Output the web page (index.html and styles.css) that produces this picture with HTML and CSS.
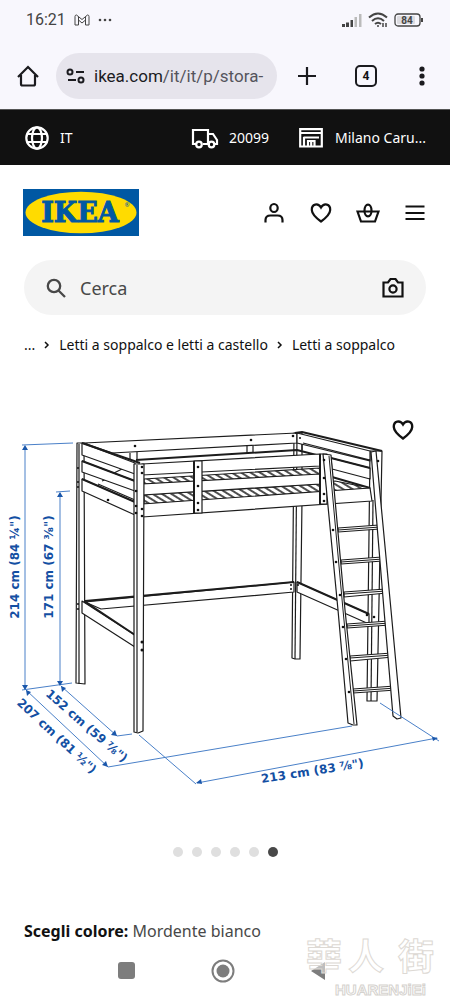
FILE: index.html
```html
<!DOCTYPE html>
<html lang="it">
<head>
    <meta charset="UTF-8">
    <meta name="viewport" content="width=device-width, initial-scale=1">
    <title>STORÅ - IKEA Italia</title>
    <link rel="stylesheet" href="styles.css">
</head>
<body>
    <div class="browser">
        <div class="status">
            <span class="time">16:21</span>
            <svg width="16" height="12" viewBox="0 0 16 12" fill="none" stroke="#444" stroke-width="1"><path d="M1 11V2.500Q1 1 2.500 1L8 5.500L13.500 1Q15 1 15 2.500V11H11.500V6L8 9L4.500 6V11Z"/><path d="M4.500 6V3M11.500 6V3"/></svg>
            <svg width="14" height="12" viewBox="0 0 14 12" fill="#444"><circle cx="2" cy="6" r="1.300"/><circle cx="7" cy="6" r="1.300"/><circle cx="12" cy="6" r="1.300"/></svg>
            <div class="status-right">
                <svg width="20" height="14" viewBox="0 0 20 14"><path fill="#444" d="M0 11h3v3H0zM4 9.500h3V14H4zM8.500 7h2.500v7H8.500z"/><path fill="#bbb" d="M12.500 4H15v10h-2.500zM17 1h2.500v13H17z"/></svg>
                <svg width="20" height="16" viewBox="0 0 20 16" fill="none" stroke="#444" stroke-width="2"><path d="M1 5.500Q10-2.500 19 5.500M4 9Q10 3.500 16 9M7 12Q10 9.500 13 12"/><circle cx="10" cy="14" r="1" fill="#444" stroke="none"/><path stroke-width="1.500" d="M15 11v4M18 11v4"/></svg>
                <svg width="30" height="14" viewBox="0 0 30 14"><rect x="1" y="1" width="25" height="12" rx="3" fill="#f8f7fd" stroke="#444" stroke-width="1.300"/><rect x="3" y="3" width="18" height="8" rx="1" fill="#dddce1"/><path d="M28 5v4" stroke="#444" stroke-width="2"/><text x="13" y="11" class="battery">84</text></svg>
            </div>
        </div>
        <div class="toolbar">
            <button class="icon" aria-label="Home"><svg width="24" height="24" viewBox="0 0 24 24" fill="none" stroke="#1b1b1f" stroke-width="2.200"><path d="M2 13L12 3L22 13M5 11V20Q5 21.500 6.500 21.500H17.500Q19 21.500 19 20V11"/></svg></button>
            <button class="address">
                <svg width="20" height="16" viewBox="0 0 20 16" fill="none" stroke="#1b1b1f" stroke-width="2"><circle cx="4" cy="4" r="2.500"/><path d="M10 4h8M2 12h8"/><circle cx="15" cy="12" r="2.500"/></svg>
                <span class="url">ikea.com<span>/it/it/p/stora-</span></span>
            </button>
            <button class="icon" aria-label="Nuova scheda"><svg width="20" height="20" viewBox="0 0 20 20" stroke="#1b1b1f" stroke-width="2.200"><path d="M10 1v18M1 10h18"/></svg></button>
            <button class="tabs" aria-label="Schede aperte">4</button>
            <button class="icon" aria-label="Menu del browser"><svg width="6" height="20" viewBox="0 0 6 20" fill="#1b1b1f"><circle cx="3" cy="3" r="2.600"/><circle cx="3" cy="10" r="2.600"/><circle cx="3" cy="17" r="2.600"/></svg></button>
        </div>
    </div>

    <div class="topbar">
        <a href="#" class="lang">
            <svg width="26" height="26" viewBox="0 0 26 26" fill="none" stroke="#fff" stroke-width="2.200"><circle cx="13" cy="13" r="10.700"/><ellipse cx="13" cy="13" rx="5" ry="10.700"/><path d="M3.500 9H22.500M3.500 17H22.500"/></svg>
            IT
        </a>
        <a href="#">
            <svg width="28" height="22" viewBox="0 0 28 22" fill="none" stroke="#fff" stroke-width="2.200"><path d="M5 17H2V3H17V17H12M17 7H22L26 13V17H23M17 17H19"/><circle cx="8" cy="17.500" r="2.800"/><circle cx="20.500" cy="17.500" r="2.800"/></svg>
            20099
        </a>
        <a href="#" class="store">
            <svg width="24" height="20" viewBox="0 0 24 20" fill="none" stroke="#fff" stroke-width="2.200"><path d="M1.200 1.200H22.800V18.500H1.200ZM1 5H23M4.500 9.500H20M5 9V19M9 18V13H15.500V18M12.200 13V18"/></svg>
            Milano Caru...
        </a>
    </div>

    <header class="header">
        <a href="#" class="logo" aria-label="IKEA">
            <svg width="116" height="47" viewBox="0 0 116 47"><rect width="116" height="47" fill="#0058a3"/><ellipse cx="58" cy="23.500" rx="55.500" ry="20.800" fill="#ffdb00"/><text x="57" y="33" class="logo-text">IKEA</text><text x="104" y="18" class="logo-reg">®</text></svg>
        </a>
        <nav class="menu">
            <button class="icon" aria-label="Profilo"><svg width="24" height="24" viewBox="0 0 24 24" fill="none" stroke="#111" stroke-width="2.200"><ellipse cx="12" cy="7" rx="3.700" ry="4"/><path d="M3.500 21.500V19Q3.500 14.500 8.500 14.500H15.500Q20.500 14.500 20.500 19V21.500"/></svg></button>
            <button class="icon" aria-label="Preferiti"><svg width="24" height="24" viewBox="0 0 24 24" fill="none" stroke="#111" stroke-width="2.200"><path d="M12 20.500Q3 14 2.800 9C2.500 3 9 1.500 12 6.500C15 1.500 21.500 3 21.200 9Q21 14 12 20.500Z"/></svg></button>
            <button class="icon" aria-label="Carrello"><svg width="24" height="24" viewBox="0 0 24 24" fill="none" stroke="#111" stroke-width="2.200"><path d="M1.500 10.500H22.500L19 20.500H5Z"/><ellipse cx="12" cy="9.500" rx="3.500" ry="5.800"/></svg></button>
            <button class="icon" aria-label="Menu"><svg width="24" height="24" viewBox="0 0 24 24" stroke="#111" stroke-width="2.200"><path d="M2.500 5.500h19M2.500 12h19M2.500 18h19"/></svg></button>
        </nav>
    </header>

    <form class="search">
        <label for="q" aria-label="Cerca"><svg width="20" height="20" viewBox="0 0 20 20" fill="none" stroke="#484848" stroke-width="2.300"><circle cx="8" cy="8" r="6.200"/><path d="M12.500 12.500L19 19"/></svg></label>
        <input type="text" id="q" placeholder="Cerca">
        <button type="button" class="icon" aria-label="Cerca con una foto"><svg width="24" height="24" viewBox="0 0 24 24" fill="none" stroke="#111" stroke-width="2.200"><path d="M2.500 6.500H7L9.500 3H14.500L17 6.500H21.500V20.500H2.500Z"/><circle cx="12" cy="13" r="3.600"/></svg></button>
    </form>

    <nav class="breadcrumb">
        <a href="#">...</a>
        <svg width="6" height="8" viewBox="0 0 6 8" fill="none" stroke="#111" stroke-width="1.500"><path d="M1 1L4 4L1 7"/></svg>
        <a href="#">Letti a soppalco e letti a castello</a>
        <svg width="6" height="8" viewBox="0 0 6 8" fill="none" stroke="#111" stroke-width="1.500"><path d="M1 1L4 4L1 7"/></svg>
        <a href="#">Letti a soppalco</a>
    </nav>

    <div class="gallery">
        <svg class="drawing" viewBox="0 400 450 420">
            <defs>
                <pattern id="slats" width="5" height="8" patternUnits="userSpaceOnUse" patternTransform="rotate(-58)">
                    <rect width="5" height="8" fill="#fff"/>
                    <path d="M2 0V8" stroke="#222" stroke-width="1.600"/>
                </pattern>
            </defs>
            <g class="wood">
                <!-- back posts -->
                <path d="M77 443L84 443L85 684L76 683Z"/>
                <path d="M79 444V684"/>
                <path d="M294 433H302V500L300 659H295L292 658Z"/>
                <path d="M297 434L295 659"/>
                <!-- back rails -->
                <path d="M84 443L297 433V443L112 453Z"/>
                <path d="M130 453V460M137 452V459M247 446V453M253 446V453"/>
                <path class="thick" d="M136 460L297 450L336 460"/>
                <path d="M85 602L294 582V592L101 609Z"/>
                <path class="thick" d="M85 601L294 582"/>
                <!-- right side -->
                <path d="M370 451H382L377 701H367Z"/>
                <path d="M373 500L371 701"/>
                <path d="M302 444V450M303 443L370 460M297 433L370 451V461L297 443Z"/>
                <path class="thick" d="M295 433L302 432L382 451"/>
                <path d="M331 458L370 468V479L332 469Z"/>
                <path class="thick" d="M331 458L370 468M332 477L370 488"/>
                <path d="M297 582L369 614V624L297 592Z"/>
                <path class="thick" d="M297 582L369 614"/>
                <!-- mattress base -->
                <path class="slats" d="M144 479L320 468V475L144 484Z"/>
                <path class="slats" d="M144 495L320 484L335 481L370 488L320 493L144 504Z"/>
                <path d="M98 484L135 500M102 481L112 477M114 473L122 469"/>
                <!-- left side -->
                <path d="M82 443L135 463V474L82 455Z"/>
                <path d="M82 461L135 481V491L82 472Z"/>
                <path d="M82 479L135 502V515L82 491Z"/>
                <path class="thick" d="M82 443L140 463M82 461L135 481M82 479L135 502"/>
                <path d="M82 601L135 635V647L82 613Z"/>
                <path class="thick" d="M84 601L135 635"/>
                <!-- front rails -->
                <path d="M142 464L320 454V466L142 475Z"/>
                <path d="M142 484L320 474V484L142 495Z"/>
                <path d="M142 504L370 488L372 501L142 517Z"/>
                <path d="M134 464H144L143 731L138 733L134 732Z"/>
                <path d="M137 465V732"/>
                <path d="M194 461H202V513H194Z"/>
                <path class="thick" d="M194 461V513"/>
                <path d="M320 454H327V504H320Z"/>
                <path class="thick" d="M320 454V504"/>
                <!-- ladder -->
                <path d="M338 528L379 525L380 529L338 532Z"/>
                <path d="M341 560L382 557L383 561L341 564Z"/>
                <path d="M344 592L386 589L387 593L344 597Z"/>
                <path d="M347 624L389 621L390 625L347 628Z"/>
                <path d="M350 656L392 653L393 657L350 661Z"/>
                <path d="M353 689L395 686L396 690L353 693Z"/>
                <path class="slim" d="M338 530L380 527M341 562L383 559M344 594L386 591M347 626L390 623M350 658L393 655M353 691L396 688"/>
                <path d="M323 454L331 455L345 610L357 725L353 725L348 723L338 610Z"/>
                <path class="slim" d="M329 456L343 610L354 724"/>
                <path d="M371 452L376 451L391 610L401 718L397 719L393 716L384 610Z"/>
            </g>
            <g class="bolts">
                <circle cx="135" cy="446" r="1.300"/><circle cx="251" cy="440" r="1.300"/><circle cx="293" cy="436" r="1.300"/><circle cx="300" cy="438" r="1"/>
                <circle cx="108" cy="500" r="1.300"/><circle cx="142" cy="467" r="1.300"/><circle cx="142" cy="473" r="1.300"/><circle cx="142" cy="509" r="1.300"/><circle cx="142" cy="516" r="1.300"/>
                <circle cx="136" cy="491" r="1.300"/><circle cx="136" cy="506" r="1.300"/><circle cx="136" cy="513" r="1.300"/>
                <circle cx="78" cy="468" r="1"/><circle cx="78" cy="482" r="1"/><circle cx="78" cy="487" r="1"/><circle cx="78" cy="604" r="1"/><circle cx="78" cy="609" r="1"/>
                <circle cx="198" cy="467" r="1.300"/><circle cx="198" cy="486" r="1.300"/><circle cx="198" cy="503" r="1.300"/><circle cx="198" cy="510" r="1.300"/>
                <circle cx="324" cy="460" r="1.300"/><circle cx="324" cy="478" r="1.300"/><circle cx="324" cy="494" r="1.300"/><circle cx="324" cy="501" r="1.300"/>
                <circle cx="142" cy="642" r="1.500"/><circle cx="142" cy="650" r="1.500"/><circle cx="291" cy="585" r="1"/><circle cx="291" cy="589" r="1"/><circle cx="298" cy="585" r="1"/>
                <circle cx="378" cy="461" r="1.300"/><circle cx="374" cy="617" r="1.300"/><circle cx="367" cy="615" r="1.300"/>
                <circle cx="333" cy="530" r="1.300"/><circle cx="336" cy="562" r="1.300"/><circle cx="340" cy="595" r="1.300"/><circle cx="343" cy="627" r="1.300"/><circle cx="346" cy="659" r="1.300"/><circle cx="349" cy="692" r="1.300"/>
            </g>
            <path class="lines" d="M22 445L73 443M25 447V689M56 492L70 491M60 493V685M22 690L72 683M26 690L108 767L352 726M61 686L117 736L132 734M139 735L196 784M197 783L437 738M380 703L439 741"/>
            <path class="arrows" d="M25 445l-3 5h6zM25 690l-3-5h6zM60 492l-3 5h6zM60 686l-3-5h6zM61 686l1 6l4-4zM117 736l-6-1l4-5zM26 690l1 6l4-4zM108 767l-6-2l4-4zM196 783l5-4l1 5zM438 738l-6-1l1 4z"/>
            <g class="sizes">
                <text transform="translate(19 567) rotate(-90)">214 cm (84 ¼")</text>
                <text transform="translate(53 567) rotate(-90)">171 cm (67 ⅜")</text>
                <text transform="translate(84 729) rotate(41)">152 cm (59 ⅞")</text>
                <text transform="translate(54 739) rotate(43)">207 cm (81 ½")</text>
                <text transform="translate(313 775) rotate(-9)">213 cm (83 ⅞")</text>
            </g>
        </svg>
        <button class="icon favorite" aria-label="Salva nei preferiti"><svg width="24" height="24" viewBox="0 0 24 24" fill="none" stroke="#111" stroke-width="2.400"><path d="M12 20.500Q3 14 2.800 9C2.500 3 9 1.500 12 6.500C15 1.500 21.500 3 21.200 9Q21 14 12 20.500Z"/></svg></button>
    </div>

    <div class="dots">
        <button aria-label="Immagine 1"></button>
        <button aria-label="Immagine 2"></button>
        <button aria-label="Immagine 3"></button>
        <button aria-label="Immagine 4"></button>
        <button aria-label="Immagine 5"></button>
        <button class="active" aria-label="Immagine 6"></button>
    </div>

    <p class="color"><strong>Scegli colore:</strong> Mordente bianco</p>

    <div class="system">
        <button class="icon" aria-label="Recenti"><svg width="24" height="24" viewBox="0 0 24 24"><rect x="3" y="3" width="17" height="17" rx="3" fill="#7d7d7d"/></svg></button>
        <button class="icon" aria-label="Home"><svg width="24" height="24" viewBox="0 0 24 24"><circle cx="12" cy="12" r="10.500" fill="none" stroke="#7d7d7d" stroke-width="2"/><circle cx="12" cy="12" r="6.500" fill="#7d7d7d"/></svg></button>
        <button class="icon" aria-label="Indietro"><svg width="24" height="24" viewBox="0 0 24 24"><path d="M4 12L18 3V21Z" fill="#7d7d7d"/></svg></button>
        <svg class="watermark" width="144" height="80" viewBox="0 0 144 80">
            <text x="0" y="50" class="mark-big">華</text>
            <text x="42" y="50" class="mark-big">人</text>
            <text x="92" y="50" class="mark-big">街</text>
            <text x="29" y="75" class="mark-small">HUARENJiEi</text>
        </svg>
    </div>
</body>
</html>
```
FILE: styles.css
```css
*{box-sizing:border-box;}
body{margin:0;background:#fff;color:#111;font-family:"Noto Sans","Noto Sans CJK SC",sans-serif;font-size:14px;line-height:20px;}
a{color:inherit;text-decoration:none;}
button{margin:0;padding:0;border:none;background:none;color:inherit;font:inherit;cursor:pointer;}
svg{display:block;flex:none;}
.icon{display:flex;align-items:center;justify-content:center;flex:none;}

/* browser bars */
.browser{background:#f8f7fd;height:110px;border-bottom:1px solid #555;}
.status{display:flex;align-items:center;gap:8px;height:40px;padding:0 26px;font-family:Roboto,sans-serif;color:#444;}
.time{font-size:16px;}
.status-right{display:flex;align-items:center;gap:6px;margin-left:auto;}
.battery{font:bold 10px Roboto,sans-serif;fill:#444;text-anchor:middle;}
.toolbar{display:flex;align-items:center;height:72px;padding:0 25px 0 16px;}
.address{display:flex;align-items:center;gap:8px;flex:1;min-width:0;height:46px;margin:0 20px 0 16px;padding:0 8px 0 10px;border-radius:23px;background:#e6e4ec;overflow:hidden;}
.url{flex:1;overflow:hidden;white-space:nowrap;text-align:left;font:17px Roboto,sans-serif;color:#1b1b1f;}
.url span{color:#55545c;}
.tabs{width:22px;height:22px;margin:0 42px 0 38px;border:2px solid #1b1b1f;border-radius:5px;font:bold 12px Roboto,sans-serif;}

/* shop header */
.topbar{display:flex;align-items:center;gap:30px;height:55px;padding:0 24px;background:#111;color:#fff;}
.topbar a{display:flex;align-items:center;gap:10px;}
.topbar .lang{margin-right:auto;}
.topbar .store{gap:12px;}
.header{display:flex;align-items:center;justify-content:space-between;height:95px;padding:0 23px;}
.logo-text{font:bold 27px "DejaVu Serif",serif;fill:#0058a3;stroke:#0058a3;stroke-width:1;text-anchor:middle;}
.logo-reg{font:6px "Noto Sans",sans-serif;fill:#0058a3;text-anchor:middle;}
.menu{display:flex;gap:23px;}
.search{display:flex;align-items:center;gap:14px;height:55px;margin:0 24px;padding:0 21px 0 22px;border-radius:28px;background:#f4f4f4;}
.search input{flex:1;min-width:0;padding:0;border:none;outline:none;background:none;color:#111;font:18px "Noto Sans",sans-serif;}
.search input::placeholder{color:#484848;opacity:1;}
.breadcrumb{display:flex;align-items:center;gap:9px;padding:20px 24px;white-space:nowrap;}

/* product */
.gallery{position:relative;margin-top:25px;}
.drawing{width:100%;height:auto;}
.wood path{fill:#fff;stroke:#1c1c1c;stroke-width:1.2;stroke-linejoin:round;}
.wood .slats{fill:url(#slats);}
.wood .thick{fill:none;stroke-width:2;}
.wood .slim{fill:none;stroke-width:1;}
.bolts{fill:#111;}
.lines{fill:none;stroke:#4a80c8;stroke-width:1;}
.arrows{fill:#1a57ab;}
.sizes{font:bold 12px "DejaVu Sans",sans-serif;fill:#134fa3;text-anchor:middle;}
.favorite{position:absolute;top:18px;right:35px;}
.dots{display:flex;justify-content:center;gap:9px;padding-top:27px;}
.dots button{width:10px;height:10px;border-radius:50%;background:#dfdfdf;}
.dots .active{background:#484848;}
.color{margin:0;padding:62px 24px 0;font-size:16px;line-height:24px;color:#484848;}
.color strong{color:#111;}

/* phone navigation */
.system{position:relative;display:flex;justify-content:center;gap:72px;padding:16px 4px 17px 0;}
.watermark{position:absolute;right:0;bottom:0;}
.mark-big{font:bold 36px "Noto Sans CJK TC",sans-serif;fill:#fff;fill-opacity:.5;stroke:#ddd9d4;stroke-width:1;}
.mark-small{font:bold 15px "Liberation Sans",sans-serif;fill:#fff;stroke:#d5d2ce;stroke-width:1;}
```
